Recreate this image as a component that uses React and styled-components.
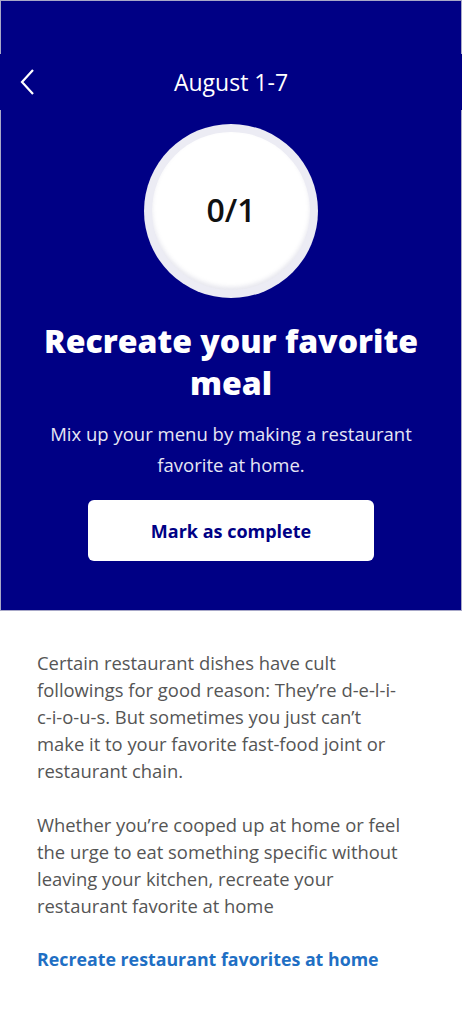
import React from 'react';
import styled, { createGlobalStyle } from 'styled-components';

const GlobalStyle = createGlobalStyle`
  body {
    margin: 0;
    background: #ffffff;
    font-family: "Open Sans", "Noto Sans", sans-serif;
  }
`;

const Page = styled.div`
  width: 462px;
  min-height: 1025px;
  background: #ffffff;
`;

const Hero = styled.section`
  background: #000085;
  border: 1px solid #a8a8c8;
  padding: 53px 0 49px;
  display: flex;
  flex-direction: column;
  align-items: center;
`;

const TopBar = styled.header`
  align-self: stretch;
  margin: 0 -1px;
  height: 56px;
  display: flex;
  align-items: center;
  justify-content: center;
  position: relative;
  background: #000085;
  color: #ffffff;
  font-size: 23px;
`;

const BackButton = styled.button`
  position: absolute;
  left: 12px;
  top: 12px;
  width: 32px;
  height: 32px;
  padding: 0;
  border: none;
  background: none;
  display: flex;
  align-items: center;
  justify-content: center;
`;

const Ring = styled.div`
  margin-top: 14px;
  width: 174px;
  height: 174px;
  border-radius: 50%;
  background: #ececf4;
  display: flex;
  align-items: center;
  justify-content: center;
`;

const Dial = styled.div`
  width: 158px;
  height: 158px;
  border-radius: 50%;
  background: #ffffff;
  box-shadow: inset 0 -3px 4px rgba(120, 120, 160, 0.18);
  display: flex;
  align-items: center;
  justify-content: center;
  padding-bottom: 4px;
  box-sizing: border-box;
  font-size: 32px;
  font-weight: 600;
  color: #111111;
`;

const Title = styled.h1`
  margin: 22px 30px 0;
  font-size: 32px;
  line-height: 42px;
  font-weight: 800;
  color: #ffffff;
  text-align: center;
`;

const Lede = styled.p`
  margin: 14px 36px 0;
  font-size: 18.5px;
  line-height: 31px;
  color: #e6e6f4;
  text-align: center;
`;

const CompleteButton = styled.button`
  margin-top: 20px;
  width: 286px;
  height: 61px;
  border: none;
  border-radius: 6px;
  background: #ffffff;
  color: #000085;
  font-family: inherit;
  font-size: 18px;
  font-weight: 700;
  cursor: pointer;
`;

const Body = styled.div`
  padding: 38px 36px 0 37px;
`;

const Paragraph = styled.p`
  margin: 0 0 27px;
  font-size: 18.4px;
  line-height: 27px;
  color: #555555;
`;

const Keep = styled.span`
  white-space: nowrap;
`;

const Link = styled.a`
  display: block;
  font-size: 17.8px;
  line-height: 27px;
  font-weight: 700;
  color: #1f6fc4;
  text-decoration: none;
  white-space: nowrap;
`;

export default function App() {
  return (
    <Page>
      <GlobalStyle />
      <Hero>
        <TopBar>
          <BackButton aria-label="Back">
            <svg width="16" height="26" viewBox="0 0 16 26" fill="none">
              <path d="M13 1 L2 13 L13 25" stroke="#ffffff" strokeWidth="2.2" />
            </svg>
          </BackButton>
          August 1-7
        </TopBar>
        <Ring>
          <Dial>0/1</Dial>
        </Ring>
        <Title>Recreate your favorite meal</Title>
        <Lede>Mix up your menu by making a restaurant favorite at home.</Lede>
        <CompleteButton>Mark as complete</CompleteButton>
      </Hero>
      <Body>
        <Paragraph>
          Certain restaurant dishes have cult followings for good reason: They’re <Keep>d-e-l-i-</Keep>
          <wbr />
          <Keep>c-i-o-u-s.</Keep> But sometimes you just can’t <Keep>make it</Keep> to your favorite fast-food joint or restaurant chain.
        </Paragraph>
        <Paragraph>
          Whether you’re cooped up at home or feel the urge to eat something specific without leaving your kitchen, recreate your restaurant favorite at home
        </Paragraph>
        <Link href="#">Recreate restaurant favorites at home</Link>
      </Body>
    </Page>
  );
}
